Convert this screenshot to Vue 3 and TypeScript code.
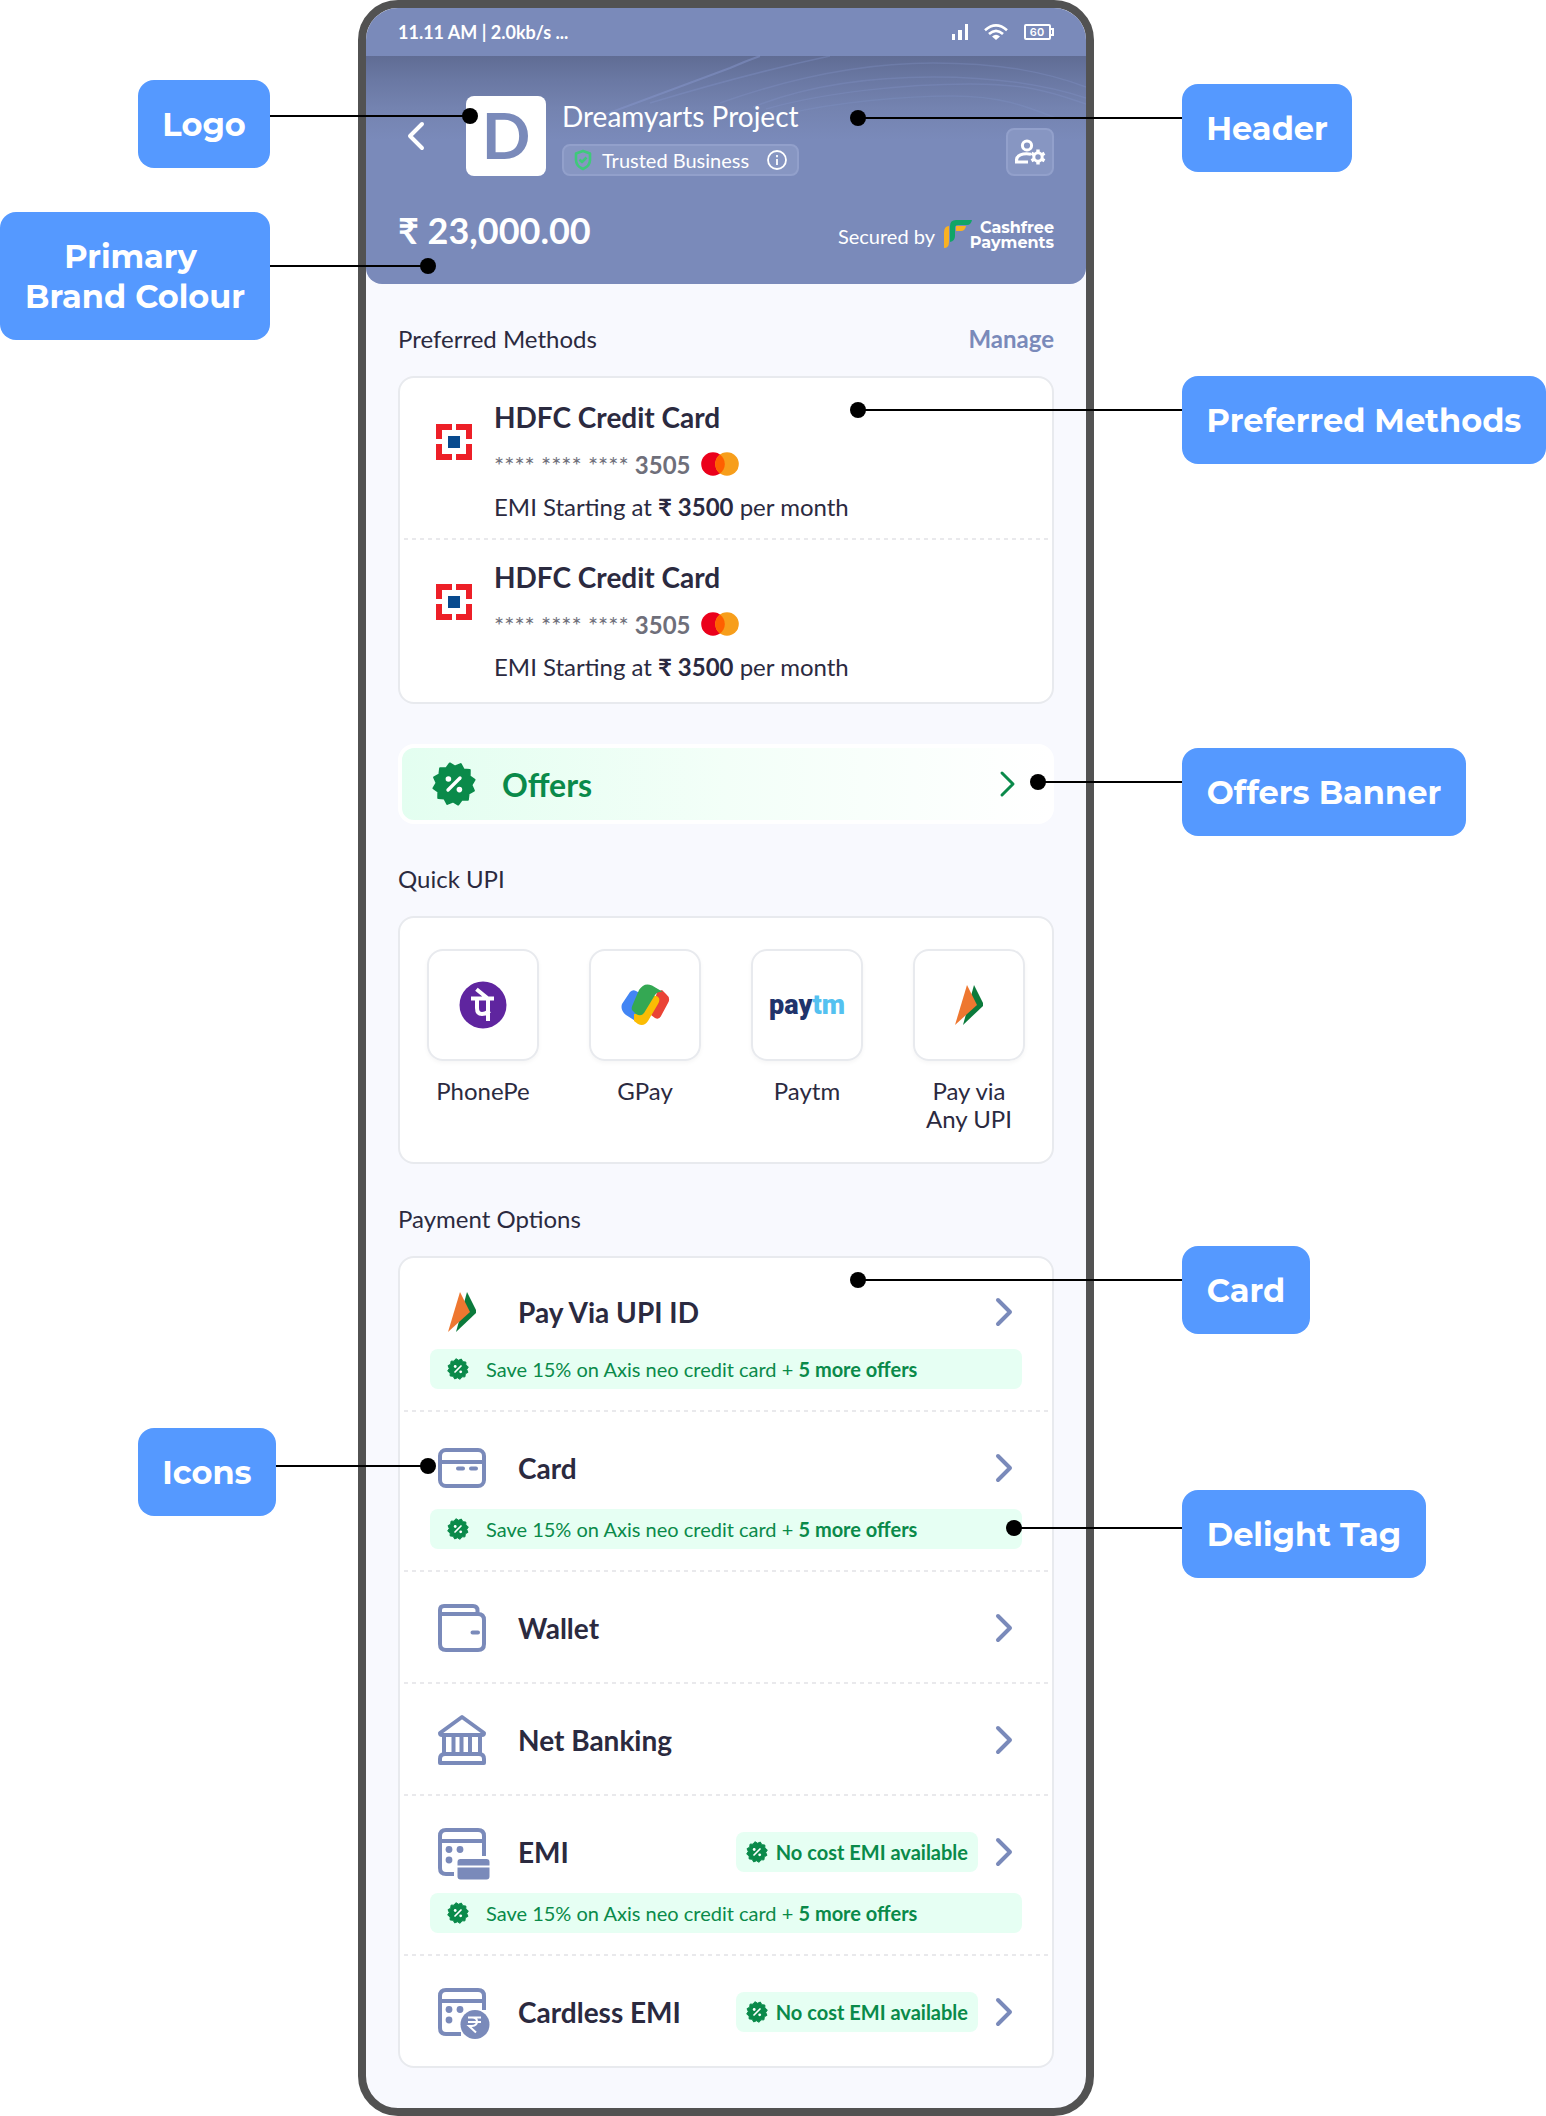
<script setup lang="ts">
interface Callout {
  text: string
  top: number
  width: number
  /** distance from the label's edge to the centre of the dot */
  reach: number
  /** vertical position of the leader line inside the label */
  lead: number
  inset?: number
}

interface PaymentOption {
  id: string
  label: string
  tag?: boolean
  noCost?: boolean
}

const leftCallouts: Callout[] = [
  { text: 'Logo', top: 80, width: 132, reach: 200, lead: 36, inset: 88 },
  { text: 'Primary \nBrand Colour', top: 212, width: 270, reach: 158, lead: 54, inset: 88 },
  { text: 'Icons', top: 1428, width: 138, reach: 152, lead: 38, inset: 82 },
]

const rightCallouts: Callout[] = [
  { text: 'Header', top: 84, width: 170, reach: 324, lead: 34 },
  { text: 'Preferred Methods', top: 376, width: 364, reach: 324, lead: 34 },
  { text: 'Offers Banner', top: 748, width: 284, reach: 144, lead: 34 },
  { text: 'Card', top: 1246, width: 128, reach: 324, lead: 34 },
  { text: 'Delight Tag', top: 1490, width: 244, reach: 168, lead: 38 },
]

const savedCards = [
  { id: 1, name: 'HDFC Credit Card', last4: '3505', emi: '₹ 3500' },
  { id: 2, name: 'HDFC Credit Card', last4: '3505', emi: '₹ 3500' },
]

const upiApps = [
  { id: 'phonepe', label: 'PhonePe' },
  { id: 'gpay', label: 'GPay' },
  { id: 'paytm', label: 'Paytm' },
  { id: 'upi', label: 'Pay via\nAny UPI' },
]

const options: PaymentOption[] = [
  { id: 'upi', label: 'Pay Via UPI ID', tag: true },
  { id: 'card', label: 'Card', tag: true },
  { id: 'wallet', label: 'Wallet' },
  { id: 'bank', label: 'Net Banking' },
  { id: 'emi', label: 'EMI', tag: true, noCost: true },
  { id: 'cardless', label: 'Cardless EMI', noCost: true },
]

const teeth = 12
const sealPoints = Array.from({ length: teeth * 2 }, (_, i) => {
  const r = i % 2 === 0 ? 21 : 17.5
  const a = (Math.PI * i) / teeth - 0.2
  return `${(22 + r * Math.cos(a)).toFixed(2)},${(22 + r * Math.sin(a)).toFixed(2)}`
}).join(' ')

const calloutStyle = (c: Callout) => ({ top: `${c.top}px`, width: `${c.width}px` })
</script>

<template>
  <div class="page">
    <svg class="defs" aria-hidden="true">
      <symbol id="seal" viewBox="0 0 44 44">
        <polygon :points="sealPoints" fill="#0a8a4a" stroke="#0a8a4a" stroke-width="2" stroke-linejoin="round" />
        <path d="M28 16 16 28" stroke="#fff" stroke-width="3.4" stroke-linecap="round" />
        <circle cx="16.4" cy="17" r="2.8" fill="#fff" />
        <circle cx="27.4" cy="27.6" r="2.8" fill="#fff" />
      </symbol>
      <symbol id="upi-mark" viewBox="0 0 28 40">
        <path d="M19 0 29 20 8 40Z" fill="#0b7a3b" />
        <path d="M12 0 22 20 0 40Z" fill="#ee7730" />
      </symbol>
    </svg>

    <aside class="side side-left">
      <div v-for="c in leftCallouts" :key="c.text" class="callout" :style="{ ...calloutStyle(c), right: c.inset + 'px' }">
        <span>{{ c.text }}</span>
        <i class="leader" :style="{ width: c.reach + 'px', top: c.lead + 'px' }"></i>
      </div>
    </aside>

    <main class="phone">
      <div class="status">
        <span>11.11 AM | 2.0kb/s ...</span>
        <span class="status-icons">
          <svg width="16" height="16" viewBox="0 0 16 16" fill="#fff">
            <rect y="10" width="3" height="6" /><rect x="6" y="6" width="4" height="10" /><rect x="13" width="3" height="16" />
          </svg>
          <svg width="24" height="16" viewBox="0 0 24 16" fill="none" stroke="#fff" stroke-width="2.6">
            <path d="M1 6.200Q12-3.500 23 6.200" /><path d="M5 10Q12 3.600 19 10" />
            <path d="M8 12.600Q12 9 16 12.600L12 16Z" fill="#fff" stroke="none" />
          </svg>
          <svg width="30" height="16" viewBox="0 0 30 16">
            <rect x="1" y="1" width="25" height="14" rx="1" fill="none" stroke="#fff" stroke-width="2" />
            <path d="M26 5h3v6h-3" fill="none" stroke="#fff" stroke-width="2" />
            <text x="13" y="12" text-anchor="middle" fill="#fff" font-family="Inter, sans-serif" font-size="11" font-weight="600">60</text>
          </svg>
        </span>
      </div>

      <header class="header">
        <svg class="waves" viewBox="0 0 720 120" preserveAspectRatio="none" fill="none" stroke="#8596cb" aria-hidden="true">
          <path d="M235 60 364 12Q380 5 394 0" stroke-width="2" opacity=".5" />
          <path d="M284 47Q380 18 464 0" stroke-width="1.500" opacity=".35" />
          <path d="M354 47C430 20 500 7 567 7S680 16 720 31" stroke-width="1.500" opacity=".3" />
          <path d="M387 51C440 30 500 21 567 21S680 29 720 42" stroke-width="1.500" opacity=".3" />
          <path d="M400 53C460 36 540 28 604 28S690 38 720 48" stroke-width="1.500" opacity=".3" />
          <path d="M420 58C470 46 540 40 587 40S660 50 690 62" stroke-width="1.500" opacity=".25" />
        </svg>
        <div class="merchant">
          <button class="back" type="button" aria-label="Back">
            <svg width="18" height="30" viewBox="0 0 18 30" fill="none" stroke="#fff" stroke-width="4" stroke-linecap="round" stroke-linejoin="round">
              <path d="M15 3 3 15 15 27" />
            </svg>
          </button>
          <div class="logo">D</div>
          <div class="identity">
            <h1>Dreamyarts Project</h1>
            <div class="trusted">
              <svg width="18" height="22" viewBox="0 0 18 22" fill="none" stroke="#3fc97b" stroke-width="2.6" stroke-linejoin="round">
                <path d="M9 2 16 4.500V11Q16 17 9 20 2 17 2 11V4.500Z" /><path d="M5.500 10.500 8 13 12.500 8.500" />
              </svg>
              <span>Trusted Business</span>
              <svg width="20" height="20" viewBox="0 0 20 20" fill="none" stroke="#fff" stroke-width="1.800">
                <circle cx="10" cy="10" r="9" /><path d="M10 9v6M10 5v2.200" />
              </svg>
            </div>
          </div>
          <button class="account" type="button" aria-label="Account settings">
            <svg width="32" height="28" viewBox="0 0 32 28" fill="none" stroke="#fff">
              <circle cx="13" cy="7.500" r="4.600" stroke-width="3" />
              <path d="M17 16.200C8 14.500 2.600 18 2.600 21.500V24H14" stroke-width="3.200" />
              <circle cx="24" cy="19" r="4.200" stroke-width="3" />
              <path d="M24 11.500v3M24 23.500v3M17.500 15.300l2.600 1.500M27.900 21.200l2.600 1.500M17.500 22.700l2.600-1.500M27.900 16.800l2.600-1.500" stroke-width="3.400" />
            </svg>
          </button>
        </div>
        <div class="amount-row">
          <strong class="amount">₹ 23,000.00</strong>
          <div class="secured">
            <span>Secured by</span>
            <span class="cashfree">
              <svg width="28" height="30" viewBox="0 0 28 30">
                <path d="M0 28V13Q0 6 5 6V22Q5 28 0 28Z" fill="#f9b122" />
                <path d="M12 6H22Q21 11 17 11H12Z" fill="#f9b122" />
                <path d="M6 22V6Q6 0 12 0H28Q27 5 23 5H14Q11 5 11 8V16Q11 21 6 22Z" fill="#10a567" />
              </svg>
              <span class="wordmark"><b>Cashfree</b><b>Payments</b></span>
            </span>
          </div>
        </div>
      </header>

      <div class="content">
        <section>
          <div class="section-head">
            <h2>Preferred Methods</h2>
            <a href="#">Manage</a>
          </div>
          <div class="panel saved">
            <button v-for="card in savedCards" :key="card.id" class="saved-card divided" type="button">
              <svg width="36" height="36" viewBox="0 0 36 36">
                <path d="M0 0H16V6H6V15H0ZM20 0H36V15H30V6H20ZM0 20H6V30H16V36H0ZM30 20H36V36H20V30H30Z" fill="#ed1f27" />
                <rect x="12" y="12" width="12" height="12" fill="#084a8e" />
              </svg>
              <span class="saved-text">
                <b class="name">{{ card.name }}</b>
                <span class="digits">
                  <span>**** **** **** <b>{{ card.last4 }}</b></span>
                  <svg width="38" height="24" viewBox="0 0 38 24">
                    <circle cx="12" cy="12" r="11.800" fill="#eb001b" />
                    <circle cx="26" cy="12" r="11.800" fill="#f79e1b" />
                    <path d="M19 2.500A11.800 11.800 0 0 1 19 21.500 11.800 11.800 0 0 1 19 2.500Z" fill="#ff5f00" />
                  </svg>
                </span>
                <span class="emi">EMI Starting at <b>{{ card.emi }}</b> per month</span>
              </span>
            </button>
          </div>
        </section>

        <button class="offers" type="button">
          <svg width="44" height="44"><use href="#seal" /></svg>
          <span>Offers</span>
          <svg width="16" height="28" viewBox="0 0 16 28" fill="none" stroke="#0a8a4a" stroke-width="3" stroke-linecap="round" stroke-linejoin="round">
            <path d="M2 3 13 14 2 25" />
          </svg>
        </button>

        <section>
          <div class="section-head"><h2>Quick UPI</h2></div>
          <div class="panel upi">
            <button v-for="app in upiApps" :key="app.id" class="upi-app" type="button">
              <span class="tile">
                <svg v-if="app.id === 'phonepe'" width="48" height="48" viewBox="0 0 48 48" fill="none" stroke="#fff" stroke-width="4" stroke-linecap="square">
                  <circle cx="24" cy="24" r="23.500" fill="#5f259f" stroke="none" />
                  <path d="M14 17.500H33M19 9.500 27 16M29 18V38M18 19V27Q18 33 23 33 26 33 29 31" />
                </svg>
                <svg v-else-if="app.id === 'gpay'" width="48" height="42" viewBox="0 0 48 42">
                  <path d="M36 8 41 6 45 10Q50 14 47 19L40 32Q38 36 34 34L30 31Z" fill="#ea4335" />
                  <path d="M9 8Q12 5 15 7L22 11 16 38 5 31Q-1 26 1 20Z" fill="#4285f4" />
                  <path d="M31 13Q35 10 38 14 39 17 37 20L27 37Q23 43 17 40L13 37V30L22 29Z" fill="#fbbc04" />
                  <path d="M18 6Q23-2 31 1.500L42 8Q37 7 34 11L23 29Q20 33 15 30L11 26Q10 24 12 20Z" fill="#34a853" />
                </svg>
                <span v-else-if="app.id === 'paytm'" class="paytm">pay<i>tm</i></span>
                <svg v-else width="28" height="40"><use href="#upi-mark" /></svg>
              </span>
              <span class="upi-label">{{ app.label }}</span>
            </button>
          </div>
        </section>

        <section>
          <div class="section-head"><h2>Payment Options</h2></div>
          <div class="panel">
            <button v-for="o in options" :key="o.id" class="option divided" type="button">
              <span class="option-main">
                <span class="option-icon">
                  <svg v-if="o.id === 'upi'" width="28" height="40"><use href="#upi-mark" /></svg>
                  <svg v-else-if="o.id === 'card'" class="line" width="48" height="40" viewBox="0 0 48 40">
                    <rect x="2" y="2" width="44" height="36" rx="6" /><path d="M2 14H46" /><path d="M20 20.500h5M33 20.500h5" stroke-linecap="round" />
                  </svg>
                  <svg v-else-if="o.id === 'wallet'" class="line" width="48" height="48" viewBox="0 0 48 48">
                    <path d="M2 10V6Q2 2 6 2H35Q39.500 2 39.500 6.500V10M2 6V40Q2 46 8 46H40Q46 46 46 40V16Q46 10 40 10H2M34.500 28.500H40" stroke-linecap="round" />
                  </svg>
                  <svg v-else-if="o.id === 'bank'" class="line" width="48" height="50" viewBox="0 0 48 50" stroke-linejoin="round">
                    <path d="M24 2 46 18Q46 20 44 20H4Q2 20 2 18Z" />
                    <path d="M6 20V38M15.500 20V38M23.500 20V38M32 20V38M42 20V38M2 48V44Q2 39 7 39H41Q46 39 46 44V48Z" />
                  </svg>
                  <svg v-else class="line" width="48" height="48" viewBox="0 0 48 48">
                    <path v-if="o.id === 'emi'" d="M46 28V8Q46 2 40 2H8Q2 2 2 8V40Q2 46 8 46H16M2 13H46" />
                    <path v-else d="M46 22V8Q46 2 40 2H8Q2 2 2 8V40Q2 46 8 46H23M2 13H46" />
                    <g class="solid">
                      <circle cx="11" cy="21.500" r="3.400" /><circle cx="22" cy="21.500" r="3.400" /><circle cx="11" cy="32" r="3.400" />
                      <path v-if="o.id === 'emi'" d="M22.500 31H48.500Q51.500 31 51.500 34V37.500H19.500V34Q19.500 31 22.500 31ZM19.500 39.500H51.500V48.500Q51.500 51.500 48.500 51.500H22.500Q19.500 51.500 19.500 48.500Z" />
                      <circle v-else cx="37" cy="36.500" r="14.500" />
                    </g>
                    <path v-if="o.id === 'cardless'" d="M30 29.500H43M30 34H43M31 29.500H34Q39 29.500 39 33.500T34 38H31L38 44.500" stroke="#fff" stroke-width="2" />
                  </svg>
                </span>
                <b class="option-label">{{ o.label }}</b>
                <span v-if="o.noCost" class="no-cost">
                  <svg width="22" height="22"><use href="#seal" /></svg>No cost EMI available
                </span>
                <svg width="16" height="28" viewBox="0 0 16 28" fill="none" stroke="#7a8aba" stroke-width="4" stroke-linecap="round" stroke-linejoin="round">
                  <path d="M2 2 14 14 2 26" />
                </svg>
              </span>
              <span v-if="o.tag" class="tag">
                <svg width="22" height="22"><use href="#seal" /></svg>
                <span>Save 15% on Axis neo credit card + <b>5 more offers</b></span>
              </span>
            </button>
          </div>
        </section>
      </div>
    </main>

    <aside class="side side-right">
      <div v-for="c in rightCallouts" :key="c.text" class="callout" :style="calloutStyle(c)">
        <span>{{ c.text }}</span>
        <i class="leader" :style="{ width: c.reach + 'px', top: c.lead + 'px' }"></i>
      </div>
    </aside>
  </div>
</template>

<style>
body {
  background: #fff;
}
</style>

<style scoped>
.page {
  --brand: #7a8aba;
  --ink: #2b2a3f;
  --green: #0a8a4a;
  --mint: #e6fff3;
  --edge: #e8eaee;
  display: grid;
  grid-template-columns: 358fr 736fr 452fr;
  font-family: Lato, sans-serif;
  font-size: 24px;
  line-height: 32px;
  color: var(--ink);
}
.page *,
.page {
  box-sizing: border-box;
}
.defs {
  position: absolute;
  width: 0;
  height: 0;
}
svg {
  display: block;
  flex: none;
  overflow: visible;
}
button {
  padding: 0;
  border: 0;
  background: none;
  font: inherit;
  color: inherit;
  text-align: left;
  cursor: pointer;
}
h1,
h2 {
  margin: 0;
  font-weight: 400;
}

/* annotations */
.side {
  position: relative;
  z-index: 1;
}
.callout {
  position: absolute;
  padding: 25px 0 23px;
  border-radius: 16px;
  background: #5599ff;
  color: #fff;
  font-family: Montserrat, Inter, sans-serif;
  font-size: 32px;
  font-weight: 700;
  line-height: 40px;
  text-align: center;
}
.callout span {
  display: block;
  white-space: pre;
}
.side-right .callout {
  left: 88px;
}
.leader {
  position: absolute;
  height: 2px;
  margin-top: -1px;
  background: #000;
}
.leader::after {
  content: '';
  position: absolute;
  top: -7px;
  width: 16px;
  height: 16px;
  border-radius: 50%;
  background: #000;
}
.side-left .leader {
  left: 100%;
}
.side-left .leader::after {
  right: -8px;
}
.side-right .leader {
  right: 100%;
}
.side-right .leader::after {
  left: -8px;
}

/* phone */
.phone {
  overflow: hidden;
  border: 8px solid #525252;
  border-radius: 40px;
  background: #f8f9fe;
}
.status {
  display: flex;
  align-items: center;
  justify-content: space-between;
  height: 48px;
  padding: 0 32px;
  background: var(--brand);
  color: #fff;
  font-size: 18px;
  font-weight: 700;
}
.status-icons {
  display: flex;
  gap: 16px;
}
.header {
  position: relative;
  padding: 40px 32px 32px;
  border-radius: 0 0 16px 16px;
  background: linear-gradient(#606c94, #6a78a3 24px, #7483b0 52px, var(--brand) 84px);
  color: #fff;
}
.waves {
  position: absolute;
  top: 0;
  left: 0;
  width: 100%;
  height: 120px;
}
.merchant {
  position: relative;
  display: flex;
  height: 80px;
}
.back {
  width: 68px;
  padding-left: 9px;
}
.logo {
  width: 80px;
  border-radius: 8px;
  background: #fff;
  color: var(--brand);
  font-size: 64px;
  font-weight: 700;
  line-height: 78px;
  text-align: center;
}
.identity {
  flex: 1;
  margin-left: 16px;
}
h1 {
  height: 48px;
  font-size: 28px;
  line-height: 40px;
}
.trusted {
  display: inline-flex;
  align-items: center;
  gap: 10px;
  height: 32px;
  padding: 0 10px;
  border: 2px solid #92a0cb;
  border-radius: 8px;
  background: #8796c2;
  font-size: 20px;
}
.trusted span {
  margin-right: 8px;
}
.account {
  display: flex;
  align-items: center;
  justify-content: center;
  align-self: flex-end;
  width: 48px;
  height: 48px;
  border: 2px solid #92a0cb;
  border-radius: 8px;
  background: #8796c2;
}
.amount-row {
  display: flex;
  justify-content: space-between;
  margin-top: 32px;
}
.amount {
  font-size: 36px;
  line-height: 44px;
}
.secured {
  display: flex;
  gap: 9px;
  padding-top: 12px;
  font-size: 20px;
  line-height: 32px;
}
.cashfree {
  display: flex;
  justify-content: space-between;
  width: 110px;
  height: 32px;
}
.wordmark {
  display: flex;
  flex-direction: column;
  align-items: flex-end;
  width: 0;
  font-family: Montserrat, "Noto Sans", sans-serif;
  font-size: 16px;
  line-height: 15px;
}

.content {
  display: flex;
  flex-direction: column;
  gap: 40px;
  padding: 40px 32px;
}
.section-head {
  display: flex;
  justify-content: space-between;
  margin-bottom: 22px;
  line-height: 30px;
}
h2 {
  font-size: 24px;
}
.section-head a {
  color: var(--brand);
  font-weight: 700;
  text-decoration: none;
}
.panel {
  border: 2px solid var(--edge);
  border-radius: 16px;
  background: #fff;
}
.saved {
  padding: 2px 0;
}
.divided {
  position: relative;
  display: block;
  width: 100%;
}
.divided:not(:last-child)::after {
  content: '';
  position: absolute;
  right: 4px;
  bottom: 0;
  left: 4px;
  height: 2px;
  background: repeating-linear-gradient(90deg, #e9e9ec 0 4px, transparent 4px 8px);
}
.saved-card {
  display: flex;
  align-items: flex-start;
  gap: 22px;
  padding: 20px 36px 18px;
}
.saved-card > svg {
  margin-top: 24px;
}
.saved-text {
  display: flex;
  flex-direction: column;
  gap: 12px;
}
.name {
  margin-bottom: 2px;
  font-size: 28px;
  line-height: 34px;
}
.digits {
  display: flex;
  align-items: center;
  gap: 10px;
  height: 32px;
  color: #6f6f7a;
}
.digits span {
  padding-top: 2px;
}
.emi {
  line-height: 30px;
}

.offers {
  display: flex;
  align-items: center;
  height: 80px;
  padding: 0 34px 0 30px;
  border: 4px solid #fff;
  border-radius: 16px;
  background: linear-gradient(90deg, #e3fef0, #f3fff8 50%, #fff);
  color: var(--green);
  font-size: 32px;
  font-weight: 700;
}
.offers span {
  flex: 1;
  margin-left: 26px;
  padding-top: 2px;
}

.upi {
  display: flex;
  justify-content: space-between;
  padding: 31px 27px 29px;
}
.upi-app {
  display: flex;
  flex-direction: column;
  align-items: center;
  gap: 16px;
  width: 112px;
}
.tile {
  display: flex;
  align-items: center;
  justify-content: center;
  width: 112px;
  height: 112px;
  border: 2px solid var(--edge);
  border-radius: 16px;
  box-shadow: 0 2px 4px rgba(0, 0, 0, 0.04);
}
.upi-label {
  min-height: 56px;
  line-height: 28px;
  text-align: center;
  white-space: pre;
}
.paytm {
  color: #20336b;
  font-family: Roboto, sans-serif;
  font-size: 27px;
  font-weight: 900;
}
.paytm i {
  color: #54c1f0;
  font-style: normal;
}

.option {
  padding: 32px 30px;
}
.option:first-child {
  padding-top: 30px;
}
.option:last-child {
  padding-bottom: 30px;
}
.option:has(.tag) {
  padding-bottom: 23px;
}
.option-main {
  display: flex;
  align-items: center;
  height: 48px;
  padding: 0 10px 0 8px;
}
.option-icon {
  display: flex;
  align-items: center;
  justify-content: center;
  width: 48px;
  margin-right: 32px;
}
.line {
  fill: none;
  stroke: var(--brand);
  stroke-width: 4px;
}
.solid {
  fill: var(--brand);
  stroke: none;
}
.option-label {
  flex: 1;
  font-size: 28px;
  line-height: 36px;
}
.no-cost {
  display: flex;
  align-items: center;
  gap: 8px;
  height: 40px;
  margin-right: 18px;
  padding: 0 10px;
  border-radius: 8px;
  background: var(--mint);
  color: var(--green);
  font-size: 20px;
  font-weight: 700;
}
.tag {
  display: flex;
  align-items: center;
  gap: 17px;
  height: 40px;
  margin-top: 17px;
  padding: 0 17px;
  border-radius: 8px;
  background: var(--mint);
  color: var(--green);
  font-size: 20px;
}
.option:first-child .tag {
  margin-top: 13px;
}
</style>
